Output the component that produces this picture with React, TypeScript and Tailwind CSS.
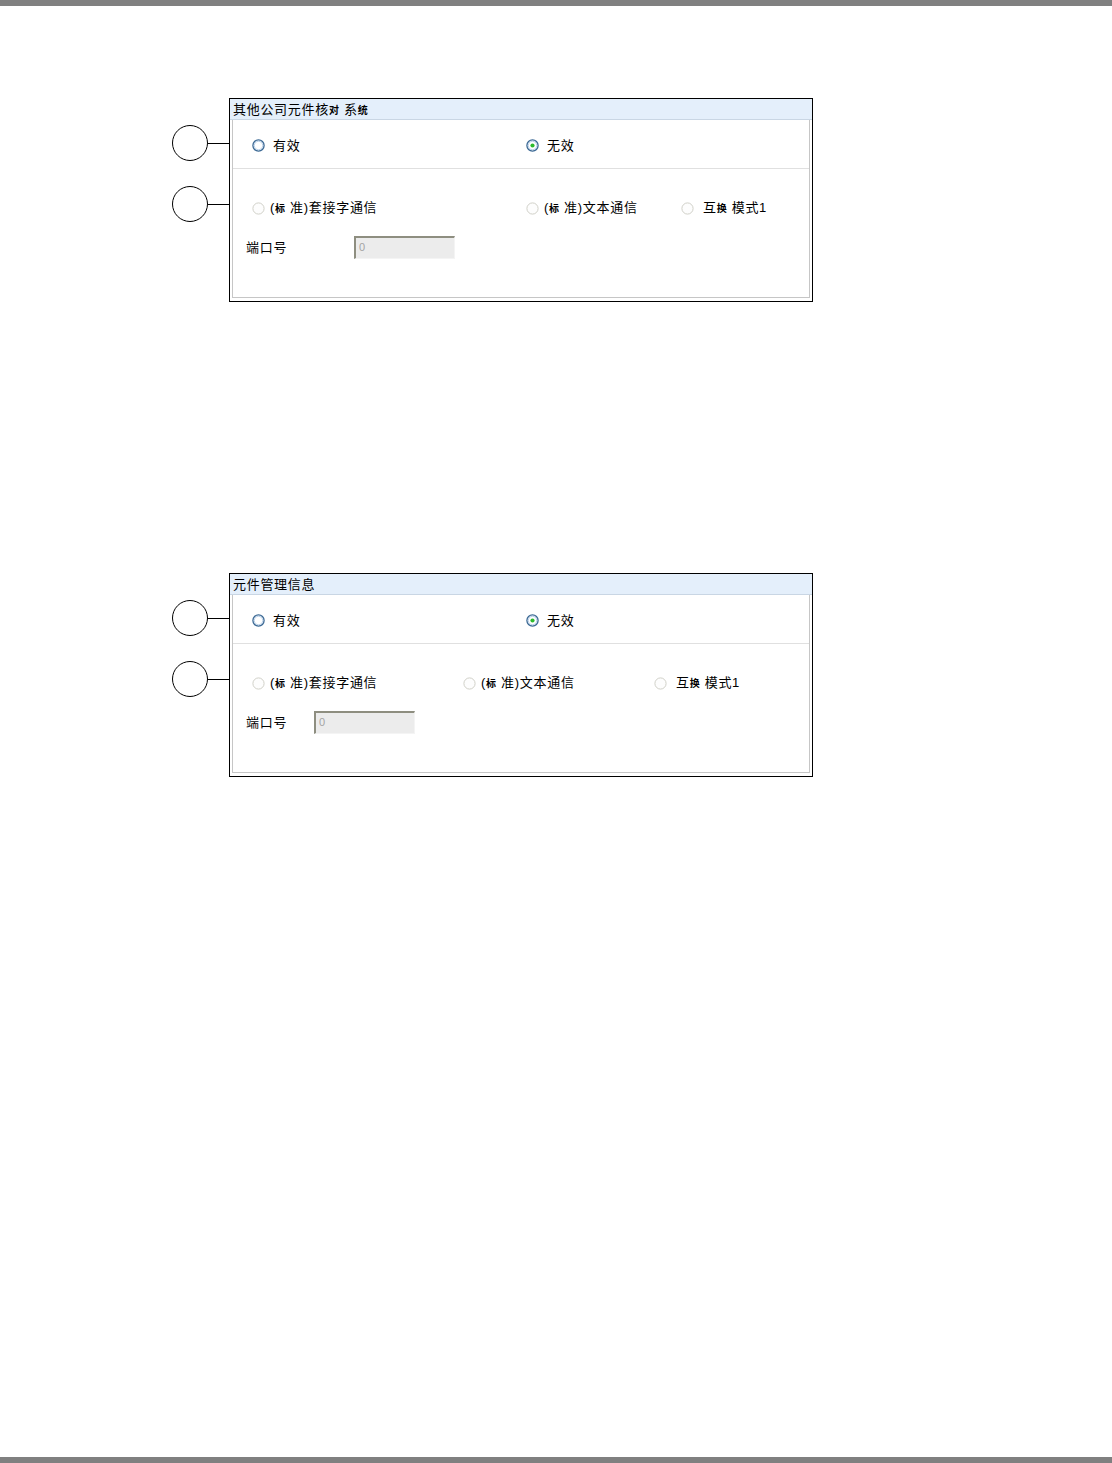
import React from 'react';

type RadioProps = { checked?: boolean; disabled?: boolean };

const Radio: React.FC<RadioProps> = ({ checked, disabled }) => (
  <svg width="13" height="13" viewBox="0 0 13 13" className="shrink-0">
    {disabled ? (
      <circle cx="6.5" cy="6.5" r="5.6" fill="#fdfdfd" stroke="#d0d0c8" strokeWidth="1" />
    ) : (
      <>
        <circle cx="6.5" cy="6.5" r="5.6" fill="#f4f7fa" stroke="#3a6894" strokeWidth="1.3" />
        <circle cx="6.5" cy="6.5" r="4.2" fill="#ffffff" stroke="#bcd2ea" strokeWidth="1" />
      </>
    )}
    {checked && <circle cx="6.5" cy="6.5" r="2.1" fill="#2dba2d" />}
  </svg>
);

const Small: React.FC<{ children: React.ReactNode }> = ({ children }) => (
  <span className="text-[10px] font-bold">{children}</span>
);

const Option: React.FC<{ checked?: boolean; disabled?: boolean; gap?: string; children: React.ReactNode }> = ({
  checked,
  disabled,
  gap = 'ml-[8px]',
  children,
}) => (
  <div className="flex items-center">
    <Radio checked={checked} disabled={disabled} />
    <span className={`${gap} whitespace-nowrap`}>{children}</span>
  </div>
);

const Callout = () => (
  <div className="flex items-center">
    <div className="w-[36px] h-[36px] rounded-full border border-black" />
    <div className="w-[21px] h-px bg-black" />
  </div>
);

interface PanelProps {
  title: React.ReactNode;
  cols: [string, string];
  labelWidth: string;
}

const Panel: React.FC<PanelProps> = ({ title, cols, labelWidth }) => (
  <div className="flex">
    <div className="w-[57px] flex flex-col pt-[27px] gap-[25px]">
      <Callout />
      <Callout />
    </div>
    <div className="w-[584px] h-[204px] border border-black flex flex-col">
      <div className="h-[21px] bg-[#e4effb] border-b border-[#c9d6e4] pl-[3px] pt-[1px] flex items-center leading-none">
        {title}
      </div>
      <div className="mx-[2px] h-[178px] border-x border-b border-[#c6c6c6] flex flex-col">
        <div className="h-[49px] border-b border-[#e0e0e0] flex items-center pl-[19px] pt-[3px]">
          <div className="w-[274px]">
            <Option>有效</Option>
          </div>
          <Option checked>无效</Option>
        </div>
        <div className="pt-[29px] h-[49px] flex items-end pl-[19px]">
          <div className="h-[20px] flex items-center">
            <div className={cols[0]}>
              <Option disabled gap="ml-[5px]">
                (<Small>标</Small> 准)套接字通信
              </Option>
            </div>
            <div className={cols[1]}>
              <Option disabled gap="ml-[5px]">
                (<Small>标</Small> 准)文本通信
              </Option>
            </div>
            <Option disabled gap="ml-[9px]">
              互<Small>换</Small> 模式1
            </Option>
          </div>
        </div>
        <div className="mt-[17px] h-[24px] flex items-center pl-[13px]">
          <div className={`${labelWidth} pt-[2px]`}>端口号</div>
          <div className="w-[101px] h-[23px] bg-[#ececec] border-t-2 border-l-2 border-t-[#8e8e80] border-l-[#8e8e80] border-r border-b border-r-[#f4f4f4] border-b-[#f4f4f4] flex items-center pl-[3px]">
            <span className="text-[11px] text-[#a4a4a4] leading-none">0</span>
          </div>
        </div>
      </div>
    </div>
  </div>
);

export default function App() {
  return (
    <div className="w-full h-[1463px] bg-white flex flex-col text-black text-[13px] tracking-[0.7px] font-['Liberation_Sans','Noto_Sans_CJK_SC',sans-serif]">
      <div className="h-[6px] bg-[#808080]" />
      <div className="pl-[172px] pt-[92px] flex flex-col gap-[271px]">
        <Panel
          title={
            <span>
              其他公司元件核<Small>对</Small> 系<Small>统</Small>
            </span>
          }
          cols={['w-[274px]', 'w-[155px]']}
          labelWidth="w-[108px]"
        />
        <Panel title={<span>元件管理信息</span>} cols={['w-[211px]', 'w-[191px]']} labelWidth="w-[68px]" />
      </div>
      <div className="mt-auto h-[6px] bg-[#808080]" />
    </div>
  );
}
